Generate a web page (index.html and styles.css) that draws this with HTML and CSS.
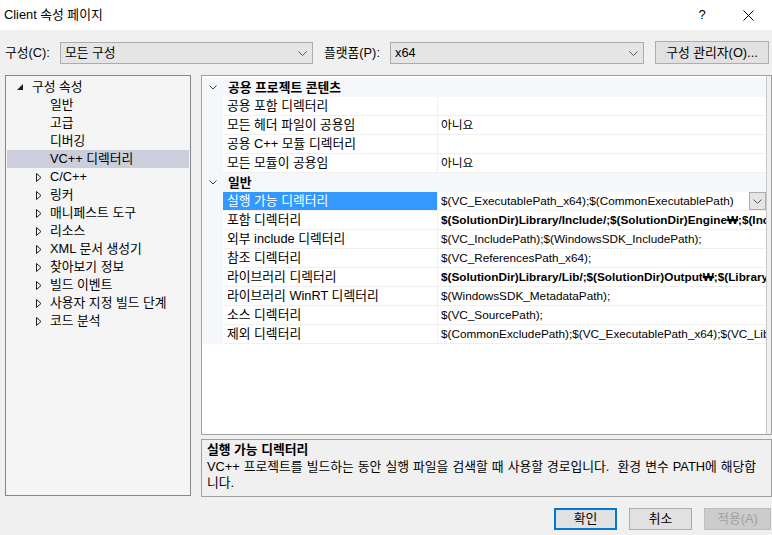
FILE: index.html
```html
<!DOCTYPE html>
<html lang="ko">
<head>
<meta charset="utf-8">
<title>Client 속성 페이지</title>
<link rel="stylesheet" href="styles.css">
</head>
<body>
<div class="dialog">
  <div class="titlebar">
    <span class="title">Client 속성 페이지</span>
    <span class="help">?</span>
    <span class="close"><svg width="11" height="11" viewBox="0 0 11 11"><path d="M0.5 0.5 L10.5 10.5 M10.5 0.5 L0.5 10.5" stroke="#000" stroke-width="1" fill="none"/></svg></span>
  </div>

  <div class="toolbar">
    <span class="lbl lbl-cfg">구성(C):</span>
    <div class="combo combo-cfg"><span class="ctext">모든 구성</span><svg class="chev" width="9" height="5" viewBox="0 0 9 5"><path d="M0.5 0.5 L4.5 4.5 L8.5 0.5" stroke="#5c4d6b" fill="none"/></svg></div>
    <span class="lbl lbl-plat">플랫폼(P):</span>
    <div class="combo combo-plat"><span class="ctext">x64</span><svg class="chev" width="9" height="5" viewBox="0 0 9 5"><path d="M0.5 0.5 L4.5 4.5 L8.5 0.5" stroke="#5c4d6b" fill="none"/></svg></div>
    <div class="btn btn-mgr">구성 관리자(O)...</div>
  </div>

  <div class="main">
    <div class="tree">
      <div class="trow lvl0"><span class="tw"><svg width="6" height="6" viewBox="0 0 6 6"><path d="M6 0 L6 6 L0 6 Z" fill="#1e1e1e"/></svg></span><span>구성 속성</span></div>
      <div class="trow lvl1"><span class="tw"></span><span>일반</span></div>
      <div class="trow lvl1"><span class="tw"></span><span>고급</span></div>
      <div class="trow lvl1"><span class="tw"></span><span>디버깅</span></div>
      <div class="trow lvl1 sel"><span class="tw"></span><span>VC++ 디렉터리</span></div>
      <div class="trow lvl1"><span class="tw"><svg width="6" height="9" viewBox="0 0 6 9"><path d="M0.5 0.5 L5 4.5 L0.5 8.5 Z" stroke="#1e1e1e" fill="none"/></svg></span><span>C/C++</span></div>
      <div class="trow lvl1"><span class="tw"><svg width="6" height="9" viewBox="0 0 6 9"><path d="M0.5 0.5 L5 4.5 L0.5 8.5 Z" stroke="#1e1e1e" fill="none"/></svg></span><span>링커</span></div>
      <div class="trow lvl1"><span class="tw"><svg width="6" height="9" viewBox="0 0 6 9"><path d="M0.5 0.5 L5 4.5 L0.5 8.5 Z" stroke="#1e1e1e" fill="none"/></svg></span><span>매니페스트 도구</span></div>
      <div class="trow lvl1"><span class="tw"><svg width="6" height="9" viewBox="0 0 6 9"><path d="M0.5 0.5 L5 4.5 L0.5 8.5 Z" stroke="#1e1e1e" fill="none"/></svg></span><span>리소스</span></div>
      <div class="trow lvl1"><span class="tw"><svg width="6" height="9" viewBox="0 0 6 9"><path d="M0.5 0.5 L5 4.5 L0.5 8.5 Z" stroke="#1e1e1e" fill="none"/></svg></span><span>XML 문서 생성기</span></div>
      <div class="trow lvl1"><span class="tw"><svg width="6" height="9" viewBox="0 0 6 9"><path d="M0.5 0.5 L5 4.5 L0.5 8.5 Z" stroke="#1e1e1e" fill="none"/></svg></span><span>찾아보기 정보</span></div>
      <div class="trow lvl1"><span class="tw"><svg width="6" height="9" viewBox="0 0 6 9"><path d="M0.5 0.5 L5 4.5 L0.5 8.5 Z" stroke="#1e1e1e" fill="none"/></svg></span><span>빌드 이벤트</span></div>
      <div class="trow lvl1"><span class="tw"><svg width="6" height="9" viewBox="0 0 6 9"><path d="M0.5 0.5 L5 4.5 L0.5 8.5 Z" stroke="#1e1e1e" fill="none"/></svg></span><span>사용자 지정 빌드 단계</span></div>
      <div class="trow lvl1"><span class="tw"><svg width="6" height="9" viewBox="0 0 6 9"><path d="M0.5 0.5 L5 4.5 L0.5 8.5 Z" stroke="#1e1e1e" fill="none"/></svg></span><span>코드 분석</span></div>
    </div>

    <div class="right">
      <div class="grid">
        <div class="gbody">
          <div class="cat"><span class="gm"><svg width="8" height="5" viewBox="0 0 8 5"><path d="M0.5 0.5 L4 4 L7.5 0.5" stroke="#3c3c3c" fill="none"/></svg></span><span class="cname">공용 프로젝트 콘텐츠</span></div>
          <div class="prow"><span class="gm"></span><span class="pname">공용 포함 디렉터리</span><span class="pval"></span></div>
          <div class="prow"><span class="gm"></span><span class="pname">모든 헤더 파일이 공용임</span><span class="pval">아니요</span></div>
          <div class="prow"><span class="gm"></span><span class="pname">공용 C++ 모듈 디렉터리</span><span class="pval"></span></div>
          <div class="prow"><span class="gm"></span><span class="pname">모든 모듈이 공용임</span><span class="pval">아니요</span></div>
          <div class="cat"><span class="gm"><svg width="8" height="5" viewBox="0 0 8 5"><path d="M0.5 0.5 L4 4 L7.5 0.5" stroke="#3c3c3c" fill="none"/></svg></span><span class="cname">일반</span></div>
          <div class="prow selrow"><span class="gm"></span><span class="pname">실행 가능 디렉터리</span><span class="pval"><span class="vtext">$(VC_ExecutablePath_x64);$(CommonExecutablePath)</span><span class="ddbtn"><svg width="9" height="5" viewBox="0 0 9 5"><path d="M0.5 0.5 L4.5 4.5 L8.5 0.5" stroke="#5c4d6b" fill="none"/></svg></span></span></div>
          <div class="prow"><span class="gm"></span><span class="pname">포함 디렉터리</span><span class="pval bold">$(SolutionDir)Library/Include/;$(SolutionDir)Engine₩;$(IncludePath)</span></div>
          <div class="prow"><span class="gm"></span><span class="pname">외부 include 디렉터리</span><span class="pval">$(VC_IncludePath);$(WindowsSDK_IncludePath);</span></div>
          <div class="prow"><span class="gm"></span><span class="pname">참조 디렉터리</span><span class="pval">$(VC_ReferencesPath_x64);</span></div>
          <div class="prow"><span class="gm"></span><span class="pname">라이브러리 디렉터리</span><span class="pval bold">$(SolutionDir)Library/Lib/;$(SolutionDir)Output₩;$(LibraryPath)</span></div>
          <div class="prow"><span class="gm"></span><span class="pname">라이브러리 WinRT 디렉터리</span><span class="pval">$(WindowsSDK_MetadataPath);</span></div>
          <div class="prow"><span class="gm"></span><span class="pname">소스 디렉터리</span><span class="pval">$(VC_SourcePath);</span></div>
          <div class="prow"><span class="gm"></span><span class="pname">제외 디렉터리</span><span class="pval">$(CommonExcludePath);$(VC_ExecutablePath_x64);$(VC_LibraryPath_x64)</span></div>
        </div>
        <div class="gedge"></div>
      </div>
      <div class="desc">
        <div class="dtitle">실행 가능 디렉터리</div>
        <div class="dtext">VC++ 프로젝트를 빌드하는 동안 실행 파일을 검색할 때 사용할 경로입니다.&nbsp; 환경 변수 PATH에 해당합<br>니다.</div>
      </div>
    </div>
  </div>

  <div class="footer">
    <div class="btn btn-ok">확인</div>
    <div class="btn btn-cancel">취소</div>
    <div class="btn btn-apply">적용(A)</div>
  </div>
</div>
</body>
</html>
```
FILE: styles.css
```css
* { box-sizing: border-box; }
html, body { margin: 0; padding: 0; }
body {
  width: 772px;
  height: 535px;
  overflow: hidden;
  background: #f0f0f0;
  color: #000;
  font-family: "Liberation Sans", "Noto Sans CJK KR", sans-serif;
  font-size: 12.8px;
  line-height: 16px;
}
.dialog { width: 772px; height: 535px; display: flex; flex-direction: column; }

/* title bar */
.titlebar {
  height: 30px;
  background: #fff;
  display: flex;
  align-items: center;
  padding-left: 4px;
}
.title { flex: 1; }
.help { width: 46px; text-align: center; font-size: 13px; margin-top: -1px; }
.close { width: 46px; display: flex; justify-content: center; align-items: center; margin-right: 1px; }

/* toolbar */
.toolbar {
  height: 45px;
  display: flex;
  align-items: flex-start;
  padding: 12px 0 0 5px;
}
.lbl { line-height: 22px; white-space: nowrap; }
.lbl-cfg { width: 55px; }
.lbl-plat { width: 66px; margin-left: 11px; }
.combo {
  height: 22px;
  background: #e5e5e5;
  border: 1px solid #acacac;
  display: flex;
  align-items: center;
  padding: 0 5px 0 4px;
}
.combo .ctext { flex: 1; }
.combo .chev { display: block; margin-top: 1px; }
.combo-cfg { width: 253px; }
.combo-plat { width: 254px; }
.btn {
  height: 22px;
  background: #e1e1e1;
  border: 1px solid #adadad;
  display: flex;
  align-items: center;
  justify-content: center;
  white-space: nowrap;
}
.btn-mgr { width: 114px; height: 23px; margin-left: 11px; margin-top: -1px; }

/* main */
.main { display: flex; padding-left: 5px; height: 422px; }
.tree {
  width: 186px;
  height: 421px;
  border: 1px solid #828790;
  background: #f5f5f5;
  padding: 2px 1px;
}
.trow { height: 18px; display: flex; align-items: center; white-space: nowrap; }
.trow .tw { width: 18px; height: 18px; display: flex; align-items: center; }
.lvl0 { padding-left: 7px; }
.lvl0 .tw { padding-left: 3px; padding-bottom: 1px; }
.lvl1 { padding-left: 25px; }
.lvl1 .tw { padding-left: 4px; }
.trow.sel { background: #cccedb; }

.right { width: 571px; margin-left: 10px; display: flex; flex-direction: column; }
.grid {
  height: 360px;
  border: 1px solid #a0a0a0;
  background: #fff;
  display: flex;
  padding-top: 2px;
}
.gbody { width: 564px; overflow: hidden; }
.gedge { flex: 1; background: #f0f0f0; border-left: 1px solid #c8c8c8; margin-top: -2px; }
.cat, .prow { height: 19px; display: flex; white-space: nowrap; }
.cat { background: #f5f7fb; align-items: center; }
.gm {
  width: 21px;
  flex: none;
  height: 19px;
  background: #f5f7fb;
  display: flex;
  align-items: center;
  justify-content: center;
  padding-left: 1px;
}
.cname { font-weight: bold; padding-left: 5px; }
.pname {
  width: 215px;
  flex: none;
  padding-left: 4px;
  border-right: 1px solid #f0f0f0;
  border-bottom: 1px solid #f0f0f0;
  line-height: 18px;
  overflow: hidden;
}
.pval {
  flex: 1;
  padding-left: 3px;
  border-bottom: 1px solid #f0f0f0;
  line-height: 18px;
  font-size: 11.75px;
  overflow: hidden;
  display: flex;
}
.pval.bold { font-weight: bold; }
.selrow .pname { background: #3399ff; color: #fff; }
.vtext { flex: 1; overflow: hidden; }
.ddbtn {
  width: 17px;
  height: 18px;
  background: #e5e5e5;
  border: 1px solid #acacac;
  display: flex;
  align-items: center;
  justify-content: center;
}

.desc {
  height: 58px;
  margin-top: 4px;
  border: 1px solid #a0a0a0;
  background: #f0f0f0;
  padding: 1px 5px 0 5px;
}
.dtitle { font-weight: bold; line-height: 18px; }
.dtext { line-height: 16px; white-space: nowrap; word-spacing: 0.5px; }

/* footer */
.footer {
  display: flex;
  justify-content: flex-end;
  padding: 11px 1px 0 0;
  gap: 12px;
}
.btn-ok, .btn-cancel { width: 63px; }
.btn-ok { border: 2px solid #0078d7; }
.btn-apply {
  width: 67px;
  background: #cccccc;
  border: 1px dotted #b0b0b0;
  color: #a0a0a0;
}
```
